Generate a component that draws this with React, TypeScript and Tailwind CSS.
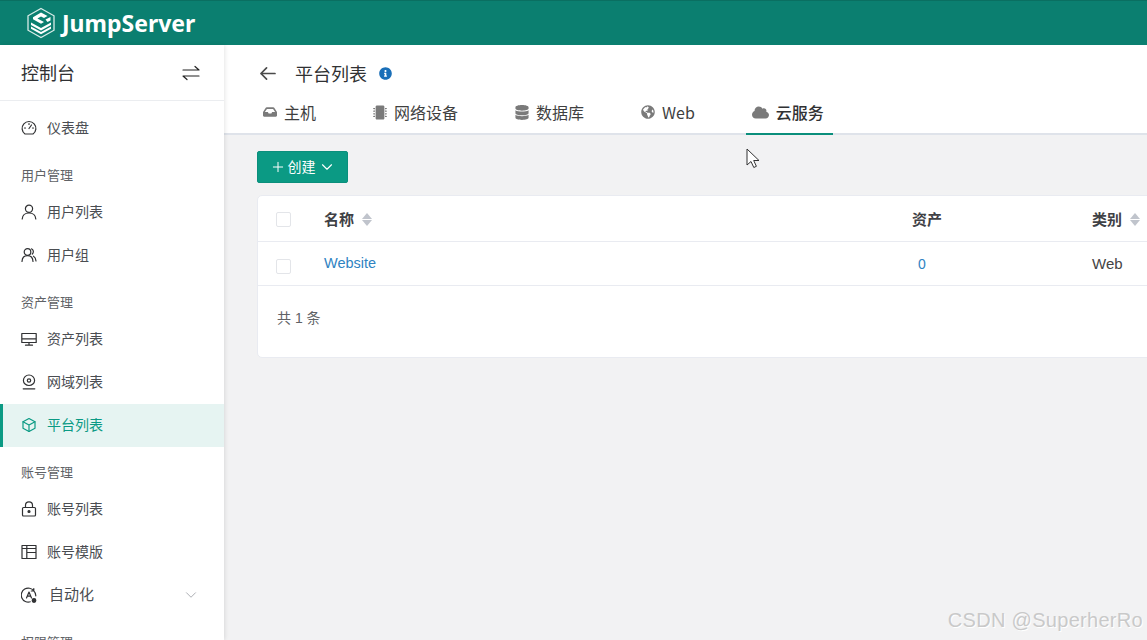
import { ChevronDown, Plus } from "lucide-react";
import type { ReactNode } from "react";
import { FaCloud, FaDatabase, FaGlobeAmericas, FaInbox, FaInfoCircle, FaMicrochip } from "react-icons/fa";

const CJK = "font-['Noto_Sans_CJK_SC','Noto_Sans',sans-serif]";

const stroke = {
  fill: "none",
  stroke: "currentColor",
  strokeWidth: 1.2,
  strokeLinecap: "round" as const,
  strokeLinejoin: "round" as const,
};

function Icon({ children }: { children: ReactNode }) {
  return (
    <svg viewBox="0 0 16 16" className="h-4 w-4 shrink-0" {...stroke}>
      {children}
    </svg>
  );
}

const icons: Record<string, ReactNode> = {
  gauge: (
    <Icon>
      <path d="M4 14a6.900 6.900 0 1 1 8 0Z" />
      <path d="M8 8.500 10.500 5M3.500 8h1M11.500 8h1M8 3.500v1" />
    </Icon>
  ),
  user: (
    <Icon>
      <circle cx="8" cy="4.800" r="3.600" />
      <path d="M1.200 15c.3-3.800 3-6 6.800-6s6.500 2.200 6.800 6" />
    </Icon>
  ),
  users: (
    <Icon>
      <circle cx="6.500" cy="5" r="3.300" />
      <path d="M1 14.500c.2-3.600 2.500-5.800 5.500-5.800s5.300 2.200 5.500 5.800" />
      <path d="M10.500 1.800c1.800.5 2.600 3.600.8 5.200M12.500 9.200c1.500.8 2.300 2.700 2.500 4.800" />
    </Icon>
  ),
  monitor: (
    <Icon>
      <path d="M.8 2.500h14.400v9H.8ZM.8 7.800h14.400M8 11.500v2.500M4.500 14.200h7" />
    </Icon>
  ),
  zone: (
    <Icon>
      <path d="M8 1a5.600 5.600 0 0 1 5.600 5.500c0 2.800-2.600 5-5.600 5s-5.600-2.200-5.600-5A5.600 5.600 0 0 1 8 1Z" />
      <circle cx="8" cy="6.500" r="1.700" />
      <path d="M2.200 14.800h11.600" />
    </Icon>
  ),
  box: (
    <Icon>
      <path d="M8 1.500 14 4.800v6.400L8 14.500l-6-3.300V4.800Z" />
      <path d="M2 4.800 8 8l6-3.200M8 8v6.500" />
    </Icon>
  ),
  lock: (
    <Icon>
      <rect x="1.500" y="6.500" width="13" height="8.500" rx="1" />
      <path d="M4.500 6.500V4.300a3.500 3.500 0 0 1 7 0v2.200" />
      <circle cx="8" cy="10.500" r="1" fill="currentColor" />
    </Icon>
  ),
  template: (
    <Icon>
      <path d="M1 1.500h14v13H1ZM1 4.500h14M5.800 1.500v13M5.800 8.500h9.200" />
    </Icon>
  ),
  auto: (
    <Icon>
      <path d="M12.800 3.800A7 7 0 1 0 9.300 14.800M14.800 8.800a7 7 0 0 0-2-5M12.800 1.500v2.500h-2.500" />
      <path d="M5.500 11 8 5l2.500 6M6.300 9.200h3.400" />
      <circle cx="13" cy="13.500" r="1.800" fill="currentColor" />
    </Icon>
  ),
};

type MenuEntry =
  | { kind: "title"; label: string }
  | { kind: "item"; label: string; icon: string; active?: boolean; more?: boolean };

const menu: MenuEntry[] = [
  { kind: "item", label: "仪表盘", icon: "gauge" },
  { kind: "title", label: "用户管理" },
  { kind: "item", label: "用户列表", icon: "user" },
  { kind: "item", label: "用户组", icon: "users" },
  { kind: "title", label: "资产管理" },
  { kind: "item", label: "资产列表", icon: "monitor" },
  { kind: "item", label: "网域列表", icon: "zone" },
  { kind: "item", label: "平台列表", icon: "box", active: true },
  { kind: "title", label: "账号管理" },
  { kind: "item", label: "账号列表", icon: "lock" },
  { kind: "item", label: "账号模版", icon: "template" },
  { kind: "item", label: "自动化", icon: "auto", more: true },
  { kind: "title", label: "权限管理" },
];

const tabs = [
  { label: "主机", icon: <FaInbox className="h-[14px] w-[14px]" /> },
  { label: "网络设备", icon: <FaMicrochip className="h-[15px] w-[14px]" /> },
  { label: "数据库", icon: <FaDatabase className="h-[15px] w-[14px]" /> },
  { label: "Web", icon: <FaGlobeAmericas className="h-[14px] w-[14px]" /> },
  { label: "云服务", icon: <FaCloud className="h-[17px] w-[17px]" />, active: true },
];

function Logo() {
  return (
    <svg viewBox="0 0 32 32" className="h-[32px] w-[32px] shrink-0">
      <path d="M16 1.500 29 8.800v14.400L16 30.500 3 23.200V8.800Z" fill="none" stroke="#d8ece8" strokeWidth="1.300" />
      <path d="M16 5.500 22.500 9 19 11l-3-1.600-3.600 2 6.600 3.600-3 1.700-8-4.400v-2Z" fill="#fff" />
      <path d="M20.500 12.500 25.500 10v3.400l-3 1.600Z" fill="#fff" />
      <path d="M6 15.500 16 21l10-5.500v2.400L16 23.400 6 17.900Z" fill="#fff" />
      <path d="M6 19.500 16 25l10-5.500v2.200L16 27.200 6 21.700Z" fill="#fff" />
    </svg>
  );
}

function SortCaret() {
  return (
    <span className="flex flex-col gap-[1px]">
      <span className="h-0 w-0 border-x-[5px] border-b-[6px] border-x-transparent border-b-[#c0c4cc]" />
      <span className="h-0 w-0 border-x-[5px] border-t-[6px] border-x-transparent border-t-[#c0c4cc]" />
    </span>
  );
}

function Checkbox() {
  return <span className="block h-[15px] w-[15px] rounded-[2px] border border-[#e3e5e9] bg-white" />;
}

export default function App() {
  return (
    <div className={`relative flex h-[640px] w-[1147px] flex-col overflow-hidden bg-[#f2f2f3] ${CJK}`}>
      <header className="flex h-[45px] shrink-0 items-center border-t border-[#0a6f61] bg-[#0b7f70] pl-[25px]">
        <Logo />
        <span className="ml-[5px] font-['Noto_Sans',sans-serif] text-[23px] leading-none font-bold text-white">
          JumpServer
        </span>
      </header>

      <div className="flex min-h-0 flex-1">
        <aside className="z-10 flex w-[224px] shrink-0 flex-col overflow-hidden bg-white shadow-[1px_0_4px_rgba(0,0,0,0.1)]">
          <div className="flex h-[56px] shrink-0 items-center justify-between border-b border-[#ebedf0] pr-[24px] pl-[21px]">
            <span className="text-[18px] text-[#303133]">控制台</span>
            <svg viewBox="0 0 18 16" className="h-4 w-[18px] text-[#222]" {...stroke}>
              <path d="M1 5h16l-4-3.500M17 11H1l4 3.500" />
            </svg>
          </div>
          <nav className="flex flex-col pt-[6px]">
            {menu.map((entry) =>
              entry.kind === "title" ? (
                <div
                  key={entry.label}
                  className="flex h-[41px] shrink-0 items-end pb-[7px] pl-[21px] text-[13px] text-[#606266]"
                >
                  {entry.label}
                </div>
              ) : (
                <div
                  key={entry.label}
                  className={`flex h-[43px] shrink-0 items-center gap-[10px] pr-[24px] pb-[2px] text-[14px] ${
                    entry.active
                      ? "border-l-[3px] border-[#0b9a84] bg-[#e6f4f2] pl-[18px] text-[#0b9a84]"
                      : "pl-[21px] text-[#4a4d52]"
                  }`}
                >
                  <span className={entry.active ? "text-[#0b9a84]" : "text-[#303133]"}>{icons[entry.icon]}</span>
                  <span className={entry.more ? "ml-[2px] text-[15px]" : ""}>{entry.label}</span>
                  {entry.more ? <ChevronDown className="ml-auto h-[18px] w-[18px] text-[#909399]" strokeWidth={1} /> : null}
                </div>
              ),
            )}
          </nav>
        </aside>

        <main className="flex min-w-0 flex-1 flex-col overflow-hidden">
          <div className="h-[90px] shrink-0 border-b-2 border-[#dfe3ea] bg-white">
            <div className="flex h-[55px] items-center pt-[2px] pl-[35px]">
              <svg viewBox="0 0 18 16" className="h-[15px] w-[17px] text-[#4a4a4a]" {...stroke} strokeWidth={1.8}>
                <path d="M17 8H2M8 2 2 8l6 6" />
              </svg>
              <span className="ml-[19px] text-[18px] text-[#303133]">平台列表</span>
              <FaInfoCircle className="ml-[12px] h-[13px] w-[13px] text-[#1a6fb8]" />
            </div>
            <div className="flex h-[33px] items-start gap-[42px] pl-[33px]">
              {tabs.map((tab) => (
                <div
                  key={tab.label}
                  className={`flex h-[35px] items-start gap-[6px] pr-[9px] pl-[6px] text-[16px] leading-[24px] ${
                    tab.active ? "border-b-2 border-[#0b8f7c] font-medium text-[#303133]" : "text-[#3f3f3f]"
                  }`}
                >
                  <span className="flex h-[24px] items-center text-[#7a7a7a]">{tab.icon}</span>
                  <span className="ml-[1px]">{tab.label}</span>
                </div>
              ))}
            </div>
          </div>

          <div className="px-[33px] pt-[16px]">
            <button
              type="button"
              className="flex h-[32px] w-[91px] items-center justify-center gap-[2px] rounded-[2px] border border-[#0b8f7c] bg-[#0b9a84] pb-[1px] text-[14px] text-white"
            >
              <Plus className="h-4 w-4" strokeWidth={1.5} />
              创建
              <ChevronDown className="h-[18px] w-[18px]" strokeWidth={1.5} />
            </button>

            <div className="mt-[12px] h-[163px] w-[900px] rounded-[5px] border border-[#e9ebf1] bg-white text-[14px]">
              <div className="grid h-[46px] grid-cols-[66px_588px_180px_1fr] items-center border-b border-[#e9ebf1] pt-[1px] text-[15px] font-bold text-[#3f4145]">
                <span className="pl-[18px]">
                  <Checkbox />
                </span>
                <span className="flex items-center gap-[8px]">
                  名称 <SortCaret />
                </span>
                <span>资产</span>
                <span className="flex items-center gap-[8px]">
                  类别 <SortCaret />
                </span>
              </div>
              <div className="grid h-[44px] grid-cols-[66px_588px_180px_1fr] items-center border-b border-[#e9ebf1] font-['Liberation_Sans',sans-serif]">
                <span className="pt-[5px] pl-[18px]">
                  <Checkbox />
                </span>
                <span className="pt-[1px] text-[14.5px] text-[#2f83c2]">Website</span>
                <span className="pt-[2px] pl-[6px] text-[#2f83c2]">0</span>
                <span className="pt-[2px] text-[15px] text-[#444]">Web</span>
              </div>
              <div className="pt-[22px] pl-[19px] font-['Liberation_Sans','Noto_Sans_CJK_SC',sans-serif] text-[#606266]">
                共 1 条
              </div>
            </div>
          </div>
        </main>
      </div>

      <svg viewBox="0 0 16 22" className="absolute top-[148px] left-[746px] h-[22px] w-[16px]">
        <path
          d="M1 1v16l4-3.500 2.800 6 2.600-1.200-2.700-5.800H13Z"
          fill="#fff"
          stroke="#333"
          strokeWidth="1"
          strokeLinejoin="round"
        />
      </svg>
      <span className="absolute right-[4px] bottom-[10px] font-['Liberation_Sans',sans-serif] text-[20px] leading-none tracking-[0.3px] text-[#c9c9c9] [text-shadow:1px_1px_0_#fff]">
        CSDN @SuperherRo
      </span>
    </div>
  );
}
